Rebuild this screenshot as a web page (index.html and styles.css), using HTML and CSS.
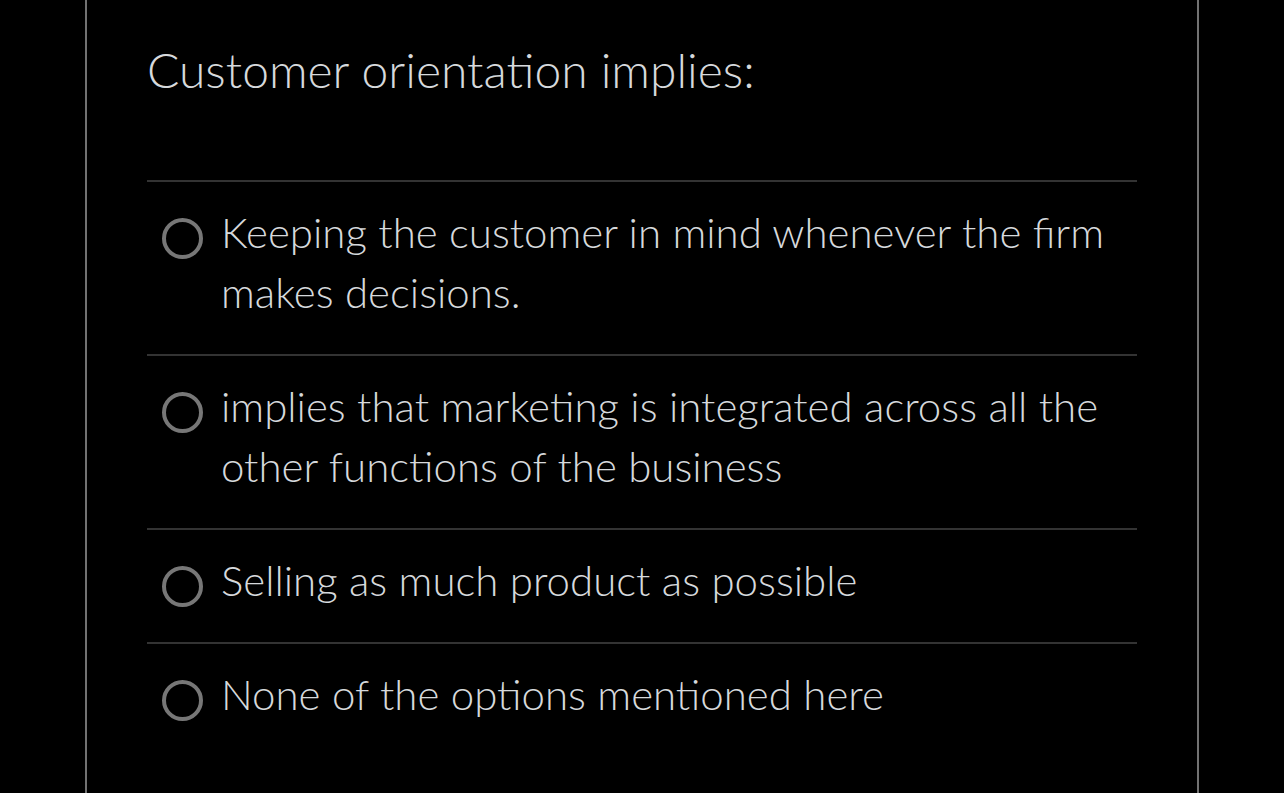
FILE: index.html
```html
<!DOCTYPE html>
<html lang="en">
<head>
<meta charset="utf-8">
<title>Customer orientation implies:</title>
<link rel="stylesheet" href="styles.css">
</head>
<body>
<div class="panel">
  <h1 class="question">Customer orientation implies:</h1>
  <ul class="options">
    <li class="option"><span class="radio"></span><span class="label">Keeping the customer in mind whenever the firm makes decisions.</span></li>
    <li class="option"><span class="radio"></span><span class="label">implies that marketing is integrated across all the other functions of the business</span></li>
    <li class="option"><span class="radio"></span><span class="label">Selling as much product as possible</span></li>
    <li class="option"><span class="radio"></span><span class="label">None of the options mentioned here</span></li>
  </ul>
</div>
</body>
</html>
```

FILE: styles.css
```css
html, body {
  margin: 0;
  padding: 0;
  background: #000;
  height: 100%;
  overflow: hidden;
}
body {
  font-family: "Lato Light", Lato, "Open Sans", sans-serif;
  font-weight: 300;
  color: #d6d9dc;
}
.panel {
  margin-left: 85px;
  width: 1114px;
  height: 793px;
  box-sizing: border-box;
  border-left: 2px solid #727272;
  border-right: 2px solid #727272;
  padding: 40px 60px 0 60px;
}
.question {
  margin: 0 0 80px 0;
  font-size: 48px;
  line-height: 60px;
  font-weight: 300;
}
.options {
  list-style: none;
  margin: 0;
  padding: 0;
}
.option {
  display: flex;
  align-items: flex-start;
  border-top: 2px solid #333333;
  padding: 20px 20px 32px 15px;
  font-size: 42px;
  line-height: 60px;
}
.radio {
  flex: none;
  width: 33px;
  height: 33px;
  border: 4px solid #777777;
  border-radius: 50%;
  margin-top: 16px;
  margin-right: 18px;
}
.label {
  flex: 1;
}
```
